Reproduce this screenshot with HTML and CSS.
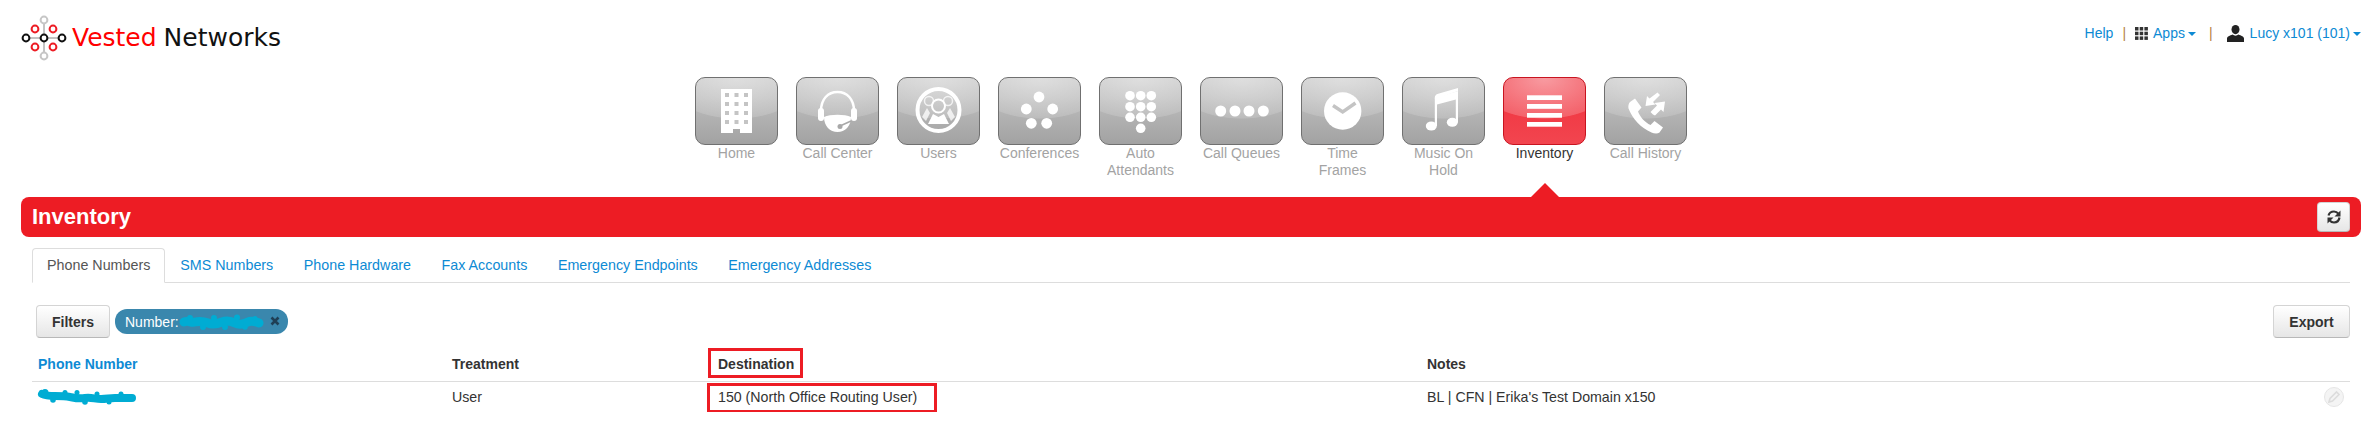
FILE: index.html
```html
<!DOCTYPE html>
<html lang="en">
<head>
    <meta charset="UTF-8">
    <title>Inventory</title>
    <link rel="stylesheet" href="styles.css">
</head>
<body>
    <header class="topbar">
        <div class="logo">
            <svg class="logo-mark" width="46" height="46" viewBox="0 0 46 46">
                <path d="M5 23H41M23 5V41" stroke="#888" stroke-width="1" fill="none"/>
                <g fill="#fff" stroke="#c6c6c6" stroke-width="2">
                    <circle cx="23" cy="5" r="3.4"/>
                    <circle cx="23" cy="41" r="3.4"/>
                </g>
                <g fill="#fff" stroke="#ed1c24" stroke-width="2">
                    <circle cx="14" cy="14" r="3.4"/>
                    <circle cx="32" cy="14" r="3.4"/>
                    <circle cx="14" cy="32" r="3.4"/>
                    <circle cx="32" cy="32" r="3.4"/>
                </g>
                <g fill="#fff" stroke="#111" stroke-width="2">
                    <circle cx="5" cy="23" r="3.4"/>
                    <circle cx="23" cy="23" r="3.4"/>
                    <circle cx="41" cy="23" r="3.4"/>
                </g>
            </svg>
            <span class="logo-text"><span class="logo-red">Vested</span> Networks</span>
        </div>
        <div class="usermenu">
            <a href="#">Help</a>
            <span class="sep sep-a">|</span>
            <svg class="grid-icon" width="13" height="13" viewBox="0 0 13 13" fill="#333">
                <rect x="0" y="0" width="3.5" height="3.5"/><rect x="4.7" y="0" width="3.5" height="3.5"/><rect x="9.4" y="0" width="3.5" height="3.5"/>
                <rect x="0" y="4.7" width="3.5" height="3.5"/><rect x="4.7" y="4.7" width="3.5" height="3.5"/><rect x="9.4" y="4.7" width="3.5" height="3.5"/>
                <rect x="0" y="9.4" width="3.5" height="3.5"/><rect x="4.7" y="9.4" width="3.5" height="3.5"/><rect x="9.4" y="9.4" width="3.5" height="3.5"/>
            </svg>
            <a href="#" class="apps">Apps<i class="caret"></i></a>
            <span class="sep sep-b">|</span>
            <svg class="user-icon" width="17" height="17" viewBox="0 0 17 17" fill="#222">
                <ellipse cx="8.5" cy="4.6" rx="4" ry="4.6"/>
                <path d="M0 17V13.5C0 11.5 3 10.5 5.5 9.5C7 11 10 11 11.5 9.5C14 10.5 17 11.5 17 13.5V17Z"/>
            </svg>
            <a href="#" class="user">Lucy x101 (101)<i class="caret"></i></a>
        </div>
    </header>

    <nav class="mainnav">
        <a class="navitem" href="#">
            <span class="tile">
                <svg width="83" height="68" viewBox="0 0 83 68">
                    <path fill="#fff" d="M26 12H57V56H45V52H38V56H26Z"/>
                    <g fill="#c4c4c4">
                        <rect x="30" y="16" width="4" height="4"/><rect x="39.500" y="16" width="4" height="4"/><rect x="49" y="16" width="4" height="4"/>
                        <rect x="30" y="25" width="4" height="4"/><rect x="39.500" y="25" width="4" height="4"/><rect x="49" y="25" width="4" height="4"/>
                        <rect x="30" y="34" width="4" height="4"/><rect x="39.500" y="34" width="4" height="4"/><rect x="49" y="34" width="4" height="4"/>
                        <rect x="30" y="43" width="4" height="4"/><rect x="39.500" y="43" width="4" height="4"/><rect x="49" y="43" width="4" height="4"/>
                    </g>
                </svg>
            </span>
            <span class="navlabel">Home</span>
        </a>
        <a class="navitem" href="#">
            <span class="tile">
                <svg width="83" height="68" viewBox="0 0 83 68">
                    <path fill="none" stroke="#fff" stroke-width="2.500" d="M25 34C25 22 32 15 41.500 15S58 22 58 34"/>
                    <rect x="22" y="31" width="6" height="13" rx="3" fill="#fff"/>
                    <rect x="55" y="31" width="6" height="13" rx="3" fill="#fff"/>
                    <path fill="#fff" d="M28 40C34 37 49 37 55 40C55 49 49 55 41.500 55S28 49 28 40Z"/>
                    <path fill="none" stroke="#a8a8a8" stroke-width="1.500" d="M55 44L44 49"/>
                    <circle cx="44" cy="49.500" r="2.500" fill="#a8a8a8"/>
                </svg>
            </span>
            <span class="navlabel">Call Center</span>
        </a>
        <a class="navitem" href="#">
            <span class="tile">
                <svg width="83" height="68" viewBox="0 0 83 68">
                    <circle cx="41.500" cy="33" r="21" fill="none" stroke="#fff" stroke-width="4"/>
                    <circle cx="32" cy="24" r="4.500" fill="none" stroke="#fff" stroke-width="1.500" opacity=".75"/>
                    <circle cx="51" cy="24" r="4.500" fill="none" stroke="#fff" stroke-width="1.500" opacity=".75"/>
                    <path fill="#fff" opacity=".75" d="M25 40L30 31L33 36L29 44ZM58 40L53 31L50 36L54 44Z"/>
                    <circle cx="41.500" cy="29" r="6.500" fill="none" stroke="#fff" stroke-width="2"/>
                    <path fill="#fff" d="M36 37L41.500 40L47 37L52 47H31Z"/>
                </svg>
            </span>
            <span class="navlabel">Users</span>
        </a>
        <a class="navitem" href="#">
            <span class="tile">
                <svg width="83" height="68" viewBox="0 0 83 68" fill="#fff">
                    <circle cx="41" cy="20" r="5.400"/>
                    <circle cx="28.300" cy="32" r="5.400"/>
                    <circle cx="54.700" cy="32" r="5.400"/>
                    <circle cx="33.300" cy="46.300" r="5.400"/>
                    <circle cx="48.700" cy="46.300" r="5.400"/>
                </svg>
            </span>
            <span class="navlabel">Conferences</span>
        </a>
        <a class="navitem" href="#">
            <span class="tile">
                <svg width="83" height="68" viewBox="0 0 83 68" fill="#fff">
                    <circle cx="31" cy="18.700" r="4.800"/><circle cx="41.700" cy="18.700" r="4.800"/><circle cx="52.300" cy="18.700" r="4.800"/>
                    <circle cx="31" cy="29.700" r="4.800"/><circle cx="41.700" cy="29.700" r="4.800"/><circle cx="52.300" cy="29.700" r="4.800"/>
                    <circle cx="31" cy="40.300" r="4.800"/><circle cx="41.700" cy="40.300" r="4.800"/><circle cx="52.300" cy="40.300" r="4.800"/>
                    <circle cx="41.700" cy="51.300" r="4.800"/>
                </svg>
            </span>
            <span class="navlabel">Auto<br>Attendants</span>
        </a>
        <a class="navitem" href="#">
            <span class="tile">
                <svg width="83" height="68" viewBox="0 0 83 68" fill="#fff">
                    <circle cx="20.700" cy="34" r="5.500"/>
                    <circle cx="35" cy="34" r="5.500"/>
                    <circle cx="49" cy="34" r="5.500"/>
                    <circle cx="63.300" cy="34" r="5.500"/>
                </svg>
            </span>
            <span class="navlabel">Call Queues</span>
        </a>
        <a class="navitem" href="#">
            <span class="tile">
                <svg width="83" height="68" viewBox="0 0 83 68">
                    <circle cx="41.700" cy="34" r="18.700" fill="#fff"/>
                    <path d="M32 28.500L41.700 35L54.500 26" fill="none" stroke="#c4c4c4" stroke-width="3.500"/>
                </svg>
            </span>
            <span class="navlabel">Time<br>Frames</span>
        </a>
        <a class="navitem" href="#">
            <span class="tile">
                <svg width="83" height="68" viewBox="0 0 83 68" fill="#fff">
                    <ellipse cx="29.300" cy="49" rx="5.500" ry="4.500"/>
                    <ellipse cx="50.300" cy="45.300" rx="5.500" ry="4.500"/>
                    <path d="M32.800 49V21L56 14V45.300H53.800V22.500L35 27.500V49Z"/>
                    <path d="M32.800 21C32.800 18 35 17 37 16.500L56 11V14L33 22Z"/>
                </svg>
            </span>
            <span class="navlabel">Music On<br>Hold</span>
        </a>
        <a class="navitem active" href="#">
            <span class="tile">
                <svg width="83" height="68" viewBox="0 0 83 68" fill="#fff">
                    <rect x="24" y="18.300" width="35" height="4.700"/>
                    <rect x="24" y="27" width="35" height="4.800"/>
                    <rect x="24" y="36" width="35" height="4.700"/>
                    <rect x="24" y="45" width="35" height="4.700"/>
                </svg>
            </span>
            <span class="navlabel">Inventory</span>
        </a>
        <a class="navitem" href="#">
            <span class="tile">
                <svg width="83" height="68" viewBox="0 0 83 68" fill="#fff">
                    <path d="M26 25L31 21.500L37.500 30.500L34 34.500C36 40 41 45.500 46.500 48L50.500 44L59 50.500L55.500 55.500C53.500 57 50 56.500 47.500 55.500C37 51 28.500 42 24.500 31.500C24 29 24.500 26.500 26 25Z"/>
                    <path d="M53.500 15.500L56 18L49 25L51.500 27.500L41.500 29L43 19L45.500 21.500Z"/>
                    <path d="M49 37.500L46.500 35L53 28.500L50.500 26L61 24.500L59.500 35L57 32.500L51 38.500Z"/>
                </svg>
            </span>
            <span class="navlabel">Call History</span>
        </a>
    </nav>

    <div class="titlebar">
        <h1>Inventory</h1>
        <button class="btn btn-refresh" type="button" aria-label="Refresh">
            <svg width="16" height="16" viewBox="0 0 16 16">
                <path d="M2.500 6.500C3.200 4 5.300 2.500 8 2.500C9.800 2.500 11.300 3.300 12.300 4.600" fill="none" stroke="#333" stroke-width="2.200"/>
                <path d="M13.500 8.500C13 11.500 10.800 13.500 8 13.500C6.200 13.500 4.700 12.700 3.700 11.400" fill="none" stroke="#333" stroke-width="2.200"/>
                <path d="M14.500 1.500V7.500H8.500Z" fill="#333"/>
                <path d="M1.500 14.500V8.500H7.500Z" fill="#333"/>
            </svg>
        </button>
    </div>

    <main class="content">
        <ul class="tabs">
            <li class="tab active"><a href="#">Phone Numbers</a></li>
            <li class="tab"><a href="#">SMS Numbers</a></li>
            <li class="tab"><a href="#">Phone Hardware</a></li>
            <li class="tab"><a href="#">Fax Accounts</a></li>
            <li class="tab"><a href="#">Emergency Endpoints</a></li>
            <li class="tab"><a href="#">Emergency Addresses</a></li>
        </ul>

        <div class="toolbar">
            <button class="btn btn-filters" type="button">Filters</button>
            <span class="tag">
                <span>Number:</span>
                <svg class="scribble-tag" width="85" height="16" viewBox="0 0 85 16" fill="#00acd3">
                    <path d="M5 8C9 6 12 9 16 8S24 7 29 9S38 10 43 8S52 7 56 9S65 10 69 8S77 8 80 9" fill="none" stroke="#00acd3" stroke-width="9" stroke-linecap="round"/>
                    <circle cx="11" cy="4" r="3"/><circle cx="24" cy="13" r="3"/><circle cx="35" cy="4" r="3"/>
                    <circle cx="46" cy="13" r="3"/><circle cx="58" cy="3.500" r="3"/><circle cx="66" cy="13" r="2.800"/><circle cx="76" cy="4.500" r="2.500"/>
                </svg>
                <svg class="tag-x" width="10" height="10" viewBox="0 0 10 10">
                    <path d="M1.500 1.500L8.500 8.500M8.500 1.500L1.500 8.500" stroke="#1f3f55" stroke-width="2.600"/>
                </svg>
            </span>
            <button class="btn btn-export" type="button">Export</button>
        </div>

        <table class="grid">
            <thead>
                <tr>
                    <th class="col-number"><a href="#">Phone Number</a></th>
                    <th class="col-treatment">Treatment</th>
                    <th class="col-destination">Destination<span class="callout callout-head"></span></th>
                    <th class="col-notes">Notes</th>
                    <th class="col-action"></th>
                </tr>
            </thead>
            <tbody>
                <tr>
                    <td>
                        <svg class="scribble-row" width="100" height="17" viewBox="0 0 100 17" fill="#00acd3">
                            <path d="M5 6C9 8 13 8 18 8S28 8 33 9S42 11 48 10S58 11 64 11S72 10 78 10S86 10 95 10" fill="none" stroke="#00acd3" stroke-width="8" stroke-linecap="round"/>
                            <circle cx="8" cy="4.500" r="3.500"/><circle cx="16" cy="12" r="2.800"/><circle cx="28" cy="4.500" r="2.500"/>
                            <circle cx="40" cy="4.500" r="2.500"/><circle cx="48" cy="14" r="2.800"/><circle cx="60" cy="6" r="2.500"/><circle cx="72" cy="14" r="2.500"/><circle cx="84" cy="6" r="2.500"/>
                        </svg>
                    </td>
                    <td>User</td>
                    <td>150 (North Office Routing User)<span class="callout callout-cell"></span></td>
                    <td>BL | CFN | Erika's Test Domain x150</td>
                    <td class="cell-action">
                        <span class="edit-btn">
                            <svg width="14" height="14" viewBox="0 0 14 14">
                                <path d="M2 12L3 8.500L9.500 2L12 4.500L5.500 11Z" fill="none" stroke="#dcdcdc" stroke-width="1.600"/>
                            </svg>
                        </span>
                    </td>
                </tr>
            </tbody>
        </table>
    </main>
</body>
</html>
```

FILE: styles.css
```css
* {
    box-sizing: border-box;
}

html, body {
    margin: 0;
    padding: 0;
    background: #fff;
}

body {
    font-family: "Liberation Sans", Arial, sans-serif;
    font-size: 14px;
    color: #333;
}

a {
    color: #0d8ad4;
    text-decoration: none;
}

/* top bar */
.topbar {
    display: flex;
    justify-content: space-between;
    height: 77px;
    padding: 15px 19px 0 21px;
}

.logo {
    display: flex;
    align-items: flex-start;
}

.logo-mark {
    flex: none;
}

.logo-text {
    margin-left: 5px;
    font-family: "DejaVu Sans", sans-serif;
    font-size: 25px;
    line-height: 45px;
    word-spacing: -1px;
    color: #111;
    white-space: nowrap;
}

.logo-red {
    color: #f00;
}

.usermenu {
    display: flex;
    align-items: center;
    height: 36px;
    line-height: 17px;
    white-space: nowrap;
}

.sep {
    color: #b5813f;
}

.sep-a {
    margin: 0 9px;
}

.sep-b {
    margin: 0 14px 0 13px;
}

.grid-icon {
    margin-right: 5px;
}

.user-icon {
    margin-right: 6px;
}

.caret {
    display: inline-block;
    margin-left: 3px;
    vertical-align: middle;
    border-top: 4px solid #0d8ad4;
    border-left: 4px solid transparent;
    border-right: 4px solid transparent;
}

/* icon nav */
.mainnav {
    display: flex;
    justify-content: center;
    gap: 18px;
    height: 120px;
    padding-left: 2px;
}

.navitem {
    position: relative;
    display: block;
    width: 83px;
    text-align: center;
}

.tile {
    display: block;
    height: 68px;
    border: 1px solid #707070;
    border-radius: 10px;
    background:
        radial-gradient(ellipse 88% 62% at 50% 0, rgba(255,255,255,.42) 0, rgba(255,255,255,.15) 98%, rgba(255,255,255,0) 100%),
        linear-gradient(#c8c8c8, #a2a2a2);
}

.tile svg {
    display: block;
    margin: -1px;
}

.navlabel {
    display: block;
    font-size: 14px;
    line-height: 17px;
    color: #a3a3a3;
}

.navitem.active .tile {
    border-color: #c81420;
    background:
        radial-gradient(ellipse 88% 62% at 50% 0, rgba(255,255,255,.52) 0, rgba(255,255,255,.2) 98%, rgba(255,255,255,0) 100%),
        linear-gradient(#f0303c, #f2454f);
}

.navitem.active .navlabel {
    color: #333;
}

.navitem.active::after {
    content: "";
    position: absolute;
    left: 28px;
    bottom: 0;
    border-bottom: 14px solid #ed1c24;
    border-left: 14px solid transparent;
    border-right: 14px solid transparent;
}

/* red title bar */
.titlebar {
    display: flex;
    justify-content: space-between;
    align-items: center;
    height: 40px;
    margin: 0 19px 0 21px;
    padding: 0 11px;
    background: #ed1c24;
    border-radius: 8px;
}

.titlebar h1 {
    margin: 0;
    font-size: 22px;
    font-weight: bold;
    line-height: 24px;
    color: #fff;
}

/* buttons */
.btn {
    padding: 0;
    font-family: inherit;
    font-size: 14px;
    font-weight: bold;
    color: #333;
    background: linear-gradient(#fff, #e6e6e6);
    border: 1px solid #d4d4d4;
    border-bottom-color: #b8b8b8;
    border-radius: 4px;
}

.btn-refresh {
    display: flex;
    align-items: center;
    justify-content: center;
    width: 33px;
    height: 30px;
}

.btn-filters {
    width: 74px;
    height: 33px;
}

.btn-export {
    width: 77px;
    height: 33px;
    margin-left: auto;
}

/* tabs */
.content {
    margin: 11px 30px 0 32px;
}

.tabs {
    display: flex;
    height: 35px;
    margin: 0;
    padding: 0;
    font-size: 14.3px;
    list-style: none;
    border-bottom: 1px solid #ddd;
}

.tab {
    height: 35px;
    margin-right: .5px;
    padding: 0 14px;
    line-height: 33px;
    border: 1px solid transparent;
}

.tab.active {
    margin-right: 0;
    background: #fff;
    border-color: #ddd #ddd #fff;
    border-radius: 4px 4px 0 0;
}

.tab.active a {
    color: #555;
}

/* filters row */
.toolbar {
    display: flex;
    align-items: center;
    gap: 5px;
    height: 33px;
    margin-top: 22px;
    padding-left: 4px;
}

.tag {
    display: flex;
    align-items: center;
    width: 173px;
    height: 25px;
    padding-left: 10px;
    color: #fff;
    background: #3a87ad;
    border-radius: 12px;
}

.scribble-tag {
    flex: none;
}

.tag-x {
    flex: none;
    margin-left: 6px;
    margin-top: -2px;
}

/* table */
.grid {
    width: 100%;
    margin-top: 9px;
    table-layout: fixed;
    border-collapse: collapse;
}

.grid th {
    position: relative;
    height: 34px;
    padding: 0 6px;
    text-align: left;
    font-weight: bold;
    border-bottom: 1px solid #ddd;
}

.grid td {
    position: relative;
    height: 31px;
    padding: 0 6px;
    font-size: 14.2px;
}

.col-number {
    width: 414px;
}

.col-treatment {
    width: 266px;
}

.col-destination {
    width: 709px;
}

.col-action {
    width: 40px;
}

.scribble-row {
    display: block;
    margin-left: -1px;
}

.callout {
    position: absolute;
    top: 1px;
    height: 30px;
    border: 3px solid #ed1c24;
}

.callout-head {
    left: -4px;
    width: 95px;
}

.callout-cell {
    left: -5px;
    width: 230px;
}

.cell-action {
    text-align: right;
}

.edit-btn {
    display: inline-flex;
    align-items: center;
    justify-content: center;
    width: 20px;
    height: 20px;
    vertical-align: middle;
    background: #f4f4f4;
    border: 1px solid #e6e6e6;
    border-radius: 50%;
}
```
